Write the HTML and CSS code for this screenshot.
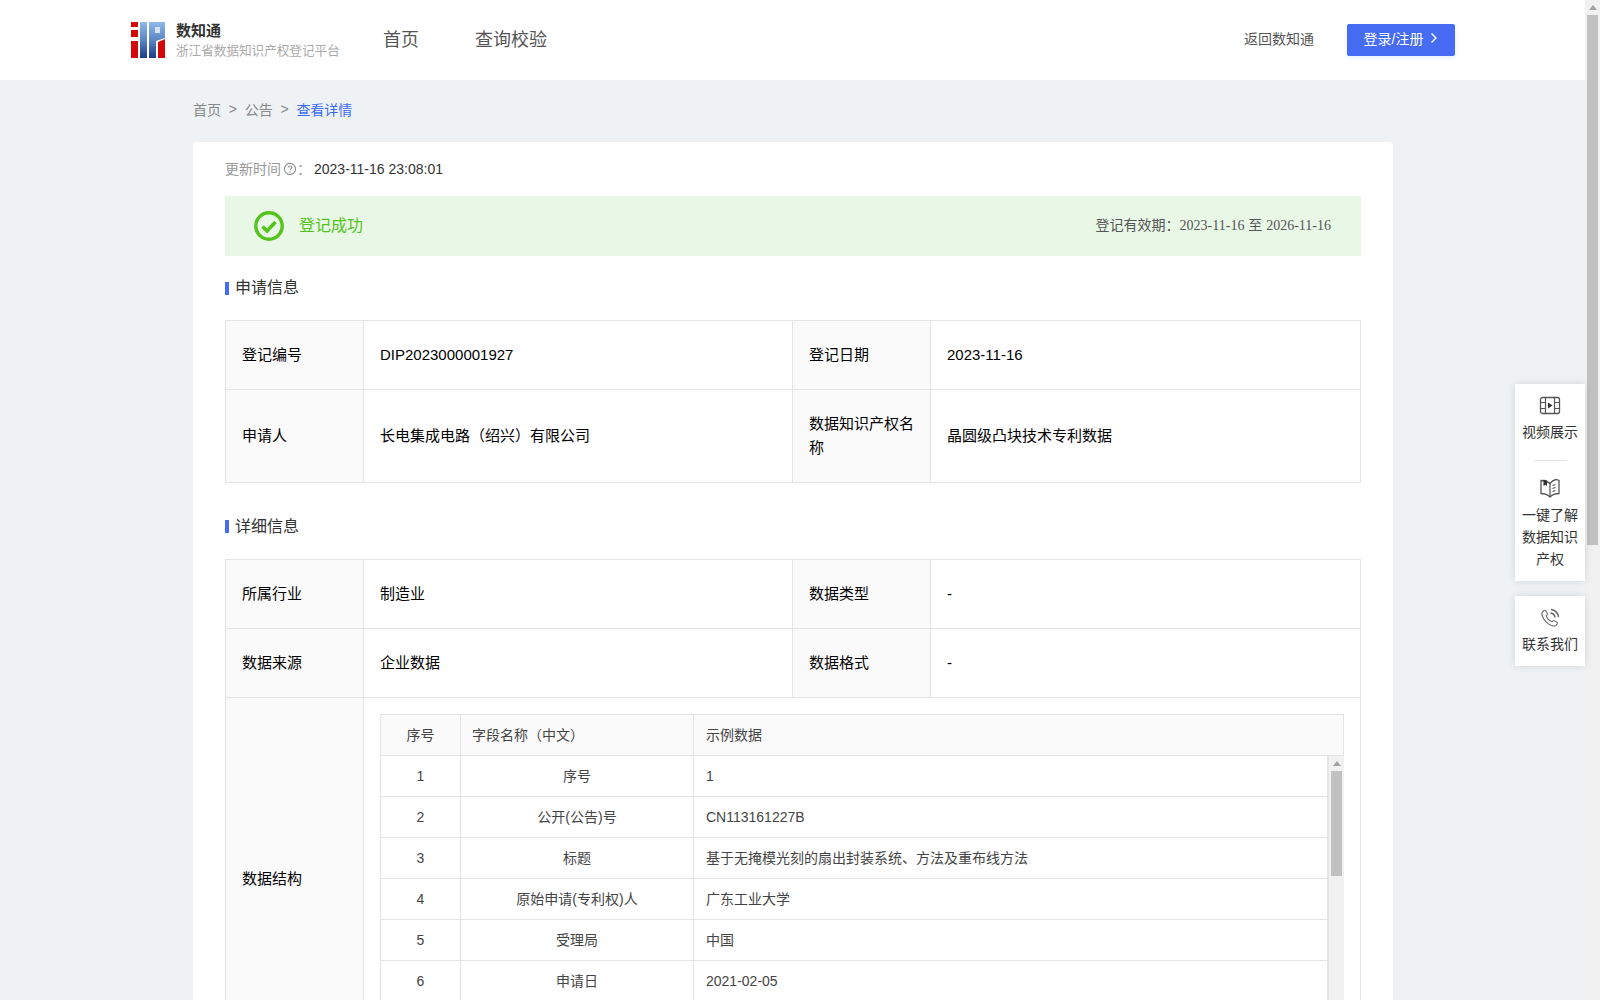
FILE: index.html
```html
<!DOCTYPE html>
<html lang="zh-CN">
<head>
    <meta charset="UTF-8">
    <title>数知通 - 查看详情</title>
    <link rel="stylesheet" href="styles.css">
</head>
<body>
    <div class="window">
        <div class="page">
            <header class="header">
                <div class="brand">
                    <svg class="logo" width="34" height="36" viewBox="0 0 34 36">
                        <defs>
                            <linearGradient id="logo-blue" x1="0" y1="0" x2="0" y2="1">
                                <stop offset="0" stop-color="#8fb9e8"/>
                                <stop offset="0.5" stop-color="#5b86c4"/>
                                <stop offset="1" stop-color="#1d3a86"/>
                            </linearGradient>
                        </defs>
                        <rect x="0" y="0" width="7" height="5" fill="#d4080c"/>
                        <rect x="0" y="8" width="7" height="7" fill="#d4080c"/>
                        <rect x="0" y="19" width="7" height="17" fill="#d4080c"/>
                        <rect x="9" y="0" width="7" height="36" fill="url(#logo-blue)"/>
                        <path d="M18 0H34V16L25 19V36H18Z" fill="url(#logo-blue)"/>
                        <rect x="24" y="5" width="5" height="6" fill="#d6e4f6"/>
                        <path d="M27 20L34 17V36H27Z" fill="#d4080c"/>
                    </svg>
                    <div class="brand-text">
                        <div class="brand-name">数知通</div>
                        <div class="brand-sub">浙江省数据知识产权登记平台</div>
                    </div>
                </div>
                <nav class="nav">
                    <a>首页</a>
                    <a>查询校验</a>
                </nav>
                <div class="header-right">
                    <a class="back">返回数知通</a>
                    <button class="login">登录/注册
                        <svg width="8" height="12" viewBox="0 0 8 12"><path d="M1.5 1.5L6 6L1.5 10.5" fill="none" stroke="#fff" stroke-width="1.4"/></svg>
                    </button>
                </div>
            </header>

            <main class="main">
                <div class="breadcrumb">
                    <span>首页</span><i>&gt;</i><span>公告</span><i>&gt;</i><span class="current">查看详情</span>
                </div>

                <div class="card">
                    <div class="update-time">
                        <span class="update-label">更新时间</span>
                        <svg width="14" height="14" viewBox="0 0 14 14">
                            <circle cx="7" cy="7" r="5.6" fill="none" stroke="#8c8c8c" stroke-width="1.1"/>
                            <path d="M5.3 5.6C5.3 3.5 8.8 3.6 8.8 5.6C8.8 6.9 7 6.9 7 8.3" fill="none" stroke="#8c8c8c" stroke-width="1.1"/>
                            <circle cx="7" cy="10" r="0.7" fill="#8c8c8c"/>
                        </svg>
                        <span class="update-label colon">：</span>
                        <span>2023-11-16 23:08:01</span>
                    </div>

                    <div class="banner">
                        <div class="banner-status">
                            <svg width="30" height="30" viewBox="0 0 30 30">
                                <circle cx="15" cy="15" r="13.2" fill="none" stroke="#52c41a" stroke-width="3.4"/>
                                <path d="M8.5 15.5L13 20L21.5 11" fill="none" stroke="#52c41a" stroke-width="3.6"/>
                            </svg>
                            <span>登记成功</span>
                        </div>
                        <div class="banner-date">登记有效期：<span class="serif">2023-11-16</span> 至 <span class="serif">2026-11-16</span></div>
                    </div>

                    <h2 class="section-title">申请信息</h2>
                    <table class="info-table">
                        <tr>
                            <th>登记编号</th>
                            <td>DIP2023000001927</td>
                            <th>登记日期</th>
                            <td>2023-11-16</td>
                        </tr>
                        <tr class="tall">
                            <th>申请人</th>
                            <td>长电集成电路（绍兴）有限公司</td>
                            <th>数据知识产权名称</th>
                            <td>晶圆级凸块技术专利数据</td>
                        </tr>
                    </table>

                    <h2 class="section-title second">详细信息</h2>
                    <table class="info-table">
                        <tr>
                            <th>所属行业</th>
                            <td>制造业</td>
                            <th>数据类型</th>
                            <td>-</td>
                        </tr>
                        <tr>
                            <th>数据来源</th>
                            <td>企业数据</td>
                            <th>数据格式</th>
                            <td>-</td>
                        </tr>
                        <tr>
                            <th>数据结构</th>
                            <td colspan="3" class="nested-cell">
                                <div class="nested">
                                    <table class="field-table field-head">
                                        <tr>
                                            <th class="col-no">序号</th>
                                            <th class="col-name">字段名称（中文）</th>
                                            <th>示例数据</th>
                                        </tr>
                                    </table>
                                    <div class="field-body">
                                        <table class="field-table">
                                            <tr><td class="col-no">1</td><td class="col-name">序号</td><td>1</td></tr>
                                            <tr><td class="col-no">2</td><td class="col-name">公开(公告)号</td><td>CN113161227B</td></tr>
                                            <tr><td class="col-no">3</td><td class="col-name">标题</td><td>基于无掩模光刻的扇出封装系统、方法及重布线方法</td></tr>
                                            <tr><td class="col-no">4</td><td class="col-name">原始申请(专利权)人</td><td>广东工业大学</td></tr>
                                            <tr><td class="col-no">5</td><td class="col-name">受理局</td><td>中国</td></tr>
                                            <tr><td class="col-no">6</td><td class="col-name">申请日</td><td>2021-02-05</td></tr>
                                        </table>
                                        <div class="inner-scroll">
                                            <div class="arrow"></div>
                                            <div class="inner-thumb"></div>
                                        </div>
                                    </div>
                                </div>
                            </td>
                        </tr>
                    </table>
                </div>
            </main>
        </div>

        <div class="page-scroll">
            <div class="arrow"></div>
            <div class="page-thumb"></div>
        </div>

        <aside class="side">
            <div class="side-box">
                <div class="side-item">
                    <svg width="22" height="20" viewBox="0 0 22 20">
                        <rect x="1.500" y="1.500" width="19" height="16" rx="2" fill="none" stroke="#555" stroke-width="1.3"/>
                        <path d="M6.500 1.500V17.500M15.500 1.500V17.500M1.500 6.500H6.500M1.500 12.500H6.500M15.500 6.500H20.500M15.500 12.500H20.500" stroke="#555" stroke-width="1.2"/>
                        <path d="M9 6.500L13.500 9.500L9 12.500Z" fill="#333"/>
                    </svg>
                    <span>视频展示</span>
                </div>
                <div class="side-line"></div>
                <div class="side-item">
                    <svg width="22" height="22" viewBox="0 0 22 22">
                        <path d="M11 6.500C8.500 4.500 5 3.500 2 3.500V16.500C5 16.500 8.500 17.500 11 20C13.500 17.500 17 16.500 20 16.500V3.500L17 2.500C14.500 3 12.500 4.500 11 6.500Z" fill="none" stroke="#555" stroke-width="1.3"/>
                        <path d="M4.500 2.500L8 3.500V9L6.200 7.800L4.500 9Z" fill="#333"/>
                        <path d="M11 6.500V20M13.500 8.500L16.500 7.500M13.500 11.500L16.500 10.500M13.500 14.500L16.500 13.500" fill="none" stroke="#555" stroke-width="1.200"/>
                    </svg>
                    <span>一键了解数据知识产权</span>
                </div>
            </div>
            <div class="side-box">
                <div class="side-item">
                    <svg width="20" height="20" viewBox="0 0 20 20">
                        <path d="M4 2.500C2.500 3.500 1.500 5 2 7C3 11.500 8 17 13 18C15 18.400 16.800 17 17.500 15.500C17.700 15 17.500 14.600 17 14.300L14.300 12.700C13.800 12.400 13.300 12.500 12.900 12.900L12 13.800C9.800 13 7 10 6.200 7.800L7.200 6.900C7.600 6.500 7.700 6 7.400 5.500L5.800 2.900C5.400 2.300 4.600 2.100 4 2.500Z" fill="none" stroke="#777" stroke-width="1.200"/>
                        <path d="M10.500 5C13 5.300 14.700 7 15 9.500M11 1.500C15 1.800 18.200 5 18.500 9" fill="none" stroke="#666" stroke-width="1.500"/>
                    </svg>
                    <span>联系我们</span>
                </div>
            </div>
        </aside>
    </div>
</body>
</html>
```

FILE: styles.css
```css
* {
    box-sizing: border-box;
}
html, body {
    margin: 0;
    height: 100%;
    overflow: hidden;
}
body {
    font-family: "Liberation Sans", "Noto Sans CJK SC", sans-serif;
    font-size: 14px;
    color: #000;
}
.window {
    position: relative;
    display: flex;
    height: 1000px;
}
.page {
    flex: 1;
    min-width: 0;
    height: 1000px;
    overflow: hidden;
    background-color: #eef2f5;
}

/* header */
.header {
    display: flex;
    align-items: center;
    height: 80px;
    padding: 0 130px 0 131px;
    background-color: #fff;
}
.brand {
    display: flex;
    align-items: center;
    width: 252px;
}
.logo {
    margin-right: 11px;
}
.brand-name {
    font-size: 15px;
    font-weight: bold;
    line-height: 20px;
    color: #333;
}
.brand-sub {
    font-size: 12.6px;
    line-height: 18px;
    margin-top: 1px;
    color: #aaa;
    white-space: nowrap;
}
.nav {
    display: flex;
    gap: 56px;
    padding-bottom: 4px;
    font-size: 18px;
    color: #555;
}
.header-right {
    display: flex;
    align-items: center;
    gap: 33px;
    margin-left: auto;
}
.back {
    padding-bottom: 4px;
    color: #555;
}
.login {
    display: flex;
    align-items: center;
    justify-content: center;
    gap: 7px;
    width: 108px;
    height: 32px;
    padding: 0 0 4px;
    border: none;
    border-radius: 2px;
    background-color: #466cf3;
    color: #fff;
    font-family: inherit;
    font-size: 14px;
    box-shadow: 0 2px 4px rgba(70,108,243,0.12);
}

/* breadcrumb */
.main {
    width: 1200px;
    margin-left: 193px;
}
.breadcrumb {
    display: flex;
    align-items: center;
    height: 62px;
    padding-bottom: 4px;
    color: #888;
}
.breadcrumb i {
    font-style: normal;
    margin: 0 7.75px;
}
.current {
    color: #3b6cf6;
}

/* card */
.card {
    padding: 0 32px;
    background-color: #fff;
    border-radius: 4px 4px 0 0;
}
.update-time {
    display: flex;
    align-items: center;
    height: 54px;
    color: #333;
}
.update-label {
    margin-bottom: 3px;
    color: #999;
}
.update-time svg {
    margin-left: 2px;
}
.colon {
    width: 17px;
}
.banner {
    display: flex;
    align-items: center;
    justify-content: space-between;
    height: 60px;
    padding: 0 30px 0 29px;
    background-color: #e9f7e7;
}
.banner-status {
    display: flex;
    align-items: center;
    gap: 15px;
    font-size: 16px;
    color: #52c41a;
}
.banner-status span {
    margin-bottom: 4px;
}
.banner-date {
    padding-bottom: 4px;
    color: #555;
}
.serif {
    font-family: "Liberation Serif", serif;
}
.section-title {
    position: relative;
    margin: 0;
    padding-left: 10px;
    height: 64px;
    line-height: 63px;
    font-size: 16px;
    font-weight: normal;
    color: #333;
}
.section-title::before {
    content: "";
    position: absolute;
    left: 0;
    top: 26px;
    width: 4px;
    height: 13px;
    background-color: #466cf3;
}
.section-title.second {
    height: 76px;
    padding-top: 12px;
}
.section-title.second::before {
    top: 37px;
}

/* info tables */
.info-table {
    width: 1136px;
    border-collapse: collapse;
    table-layout: fixed;
}
.info-table > tbody > tr > th,
.info-table > tbody > tr > td {
    height: 69px;
    padding: 0 15px 0 16px;
    border: 1px solid #e4e4e4;
    font-size: 15px;
    font-weight: normal;
    text-align: left;
    line-height: 24px;
}
.info-table > tbody > tr > th {
    width: 138px;
    background-color: #fafafa;
}
.info-table > tbody > tr > td:nth-child(2) {
    width: 429px;
}
.info-table > tbody > tr > th:nth-child(3) {
    width: 138px;
}
.info-table > tbody > tr.tall > th,
.info-table > tbody > tr.tall > td {
    height: 93px;
}
.info-table > tbody > tr > td.nested-cell {
    padding: 16px;
    vertical-align: top;
}

/* nested field table */
.nested {
    width: 964px;
    color: #444;
}
.field-table {
    width: 100%;
    border-collapse: collapse;
    table-layout: fixed;
}
.field-table th,
.field-table td {
    height: 41px;
    padding: 0 11px;
    border: 1px solid #e4e4e4;
    font-size: 14px;
    font-weight: normal;
    text-align: left;
}
.field-table th:last-child,
.field-table td:last-child {
    padding-left: 12px;
}
.field-head th {
    background-color: #fafafa;
}
.field-table .col-no {
    width: 80px;
    text-align: center;
}
.field-table .col-name {
    width: 233px;
    text-align: center;
}
.field-head .col-name {
    text-align: left;
}
.field-body {
    display: flex;
    align-items: flex-start;
    height: 288px;
    overflow: hidden;
}
.field-body .field-table {
    flex: 1;
    min-width: 0;
    margin-top: -1px;
}
.inner-scroll {
    flex: none;
    align-self: stretch;
    width: 16px;
    padding: 0 1px;
    background-color: #f1f1f1;
    border-left: 1px solid #e4e4e4;
}
.inner-thumb {
    width: 11px;
    height: 105px;
    margin: 0 0 0 1px;
    background-color: #c1c1c1;
}

/* window scrollbars */
.arrow {
    width: 0;
    height: 0;
    margin: 5px auto 5px;
    border-left: 4px solid transparent;
    border-right: 4px solid transparent;
    border-bottom: 5px solid #a3a3a3;
}
.page-scroll {
    flex: none;
    width: 15px;
    height: 1000px;
    background-color: #f1f1f1;
}
.page-thumb {
    width: 11px;
    height: 530px;
    margin-left: 2px;
    background-color: #c1c1c1;
}

/* floating side panel */
.side {
    position: absolute;
    top: 384px;
    right: 15px;
    width: 70px;
    display: flex;
    flex-direction: column;
    gap: 15px;
}
.side-box {
    padding: 12px 0 11px;
    background-color: #fff;
    box-shadow: 0 0 8px rgba(0,0,0,0.12);
}
.side-item {
    display: flex;
    flex-direction: column;
    align-items: center;
    gap: 5px;
    padding: 0 7px;
    line-height: 22px;
    color: #333;
    text-align: center;
}
.side-line {
    width: 32px;
    height: 1px;
    margin: 17px auto 16px;
    background-color: #e2e2e2;
}
```
